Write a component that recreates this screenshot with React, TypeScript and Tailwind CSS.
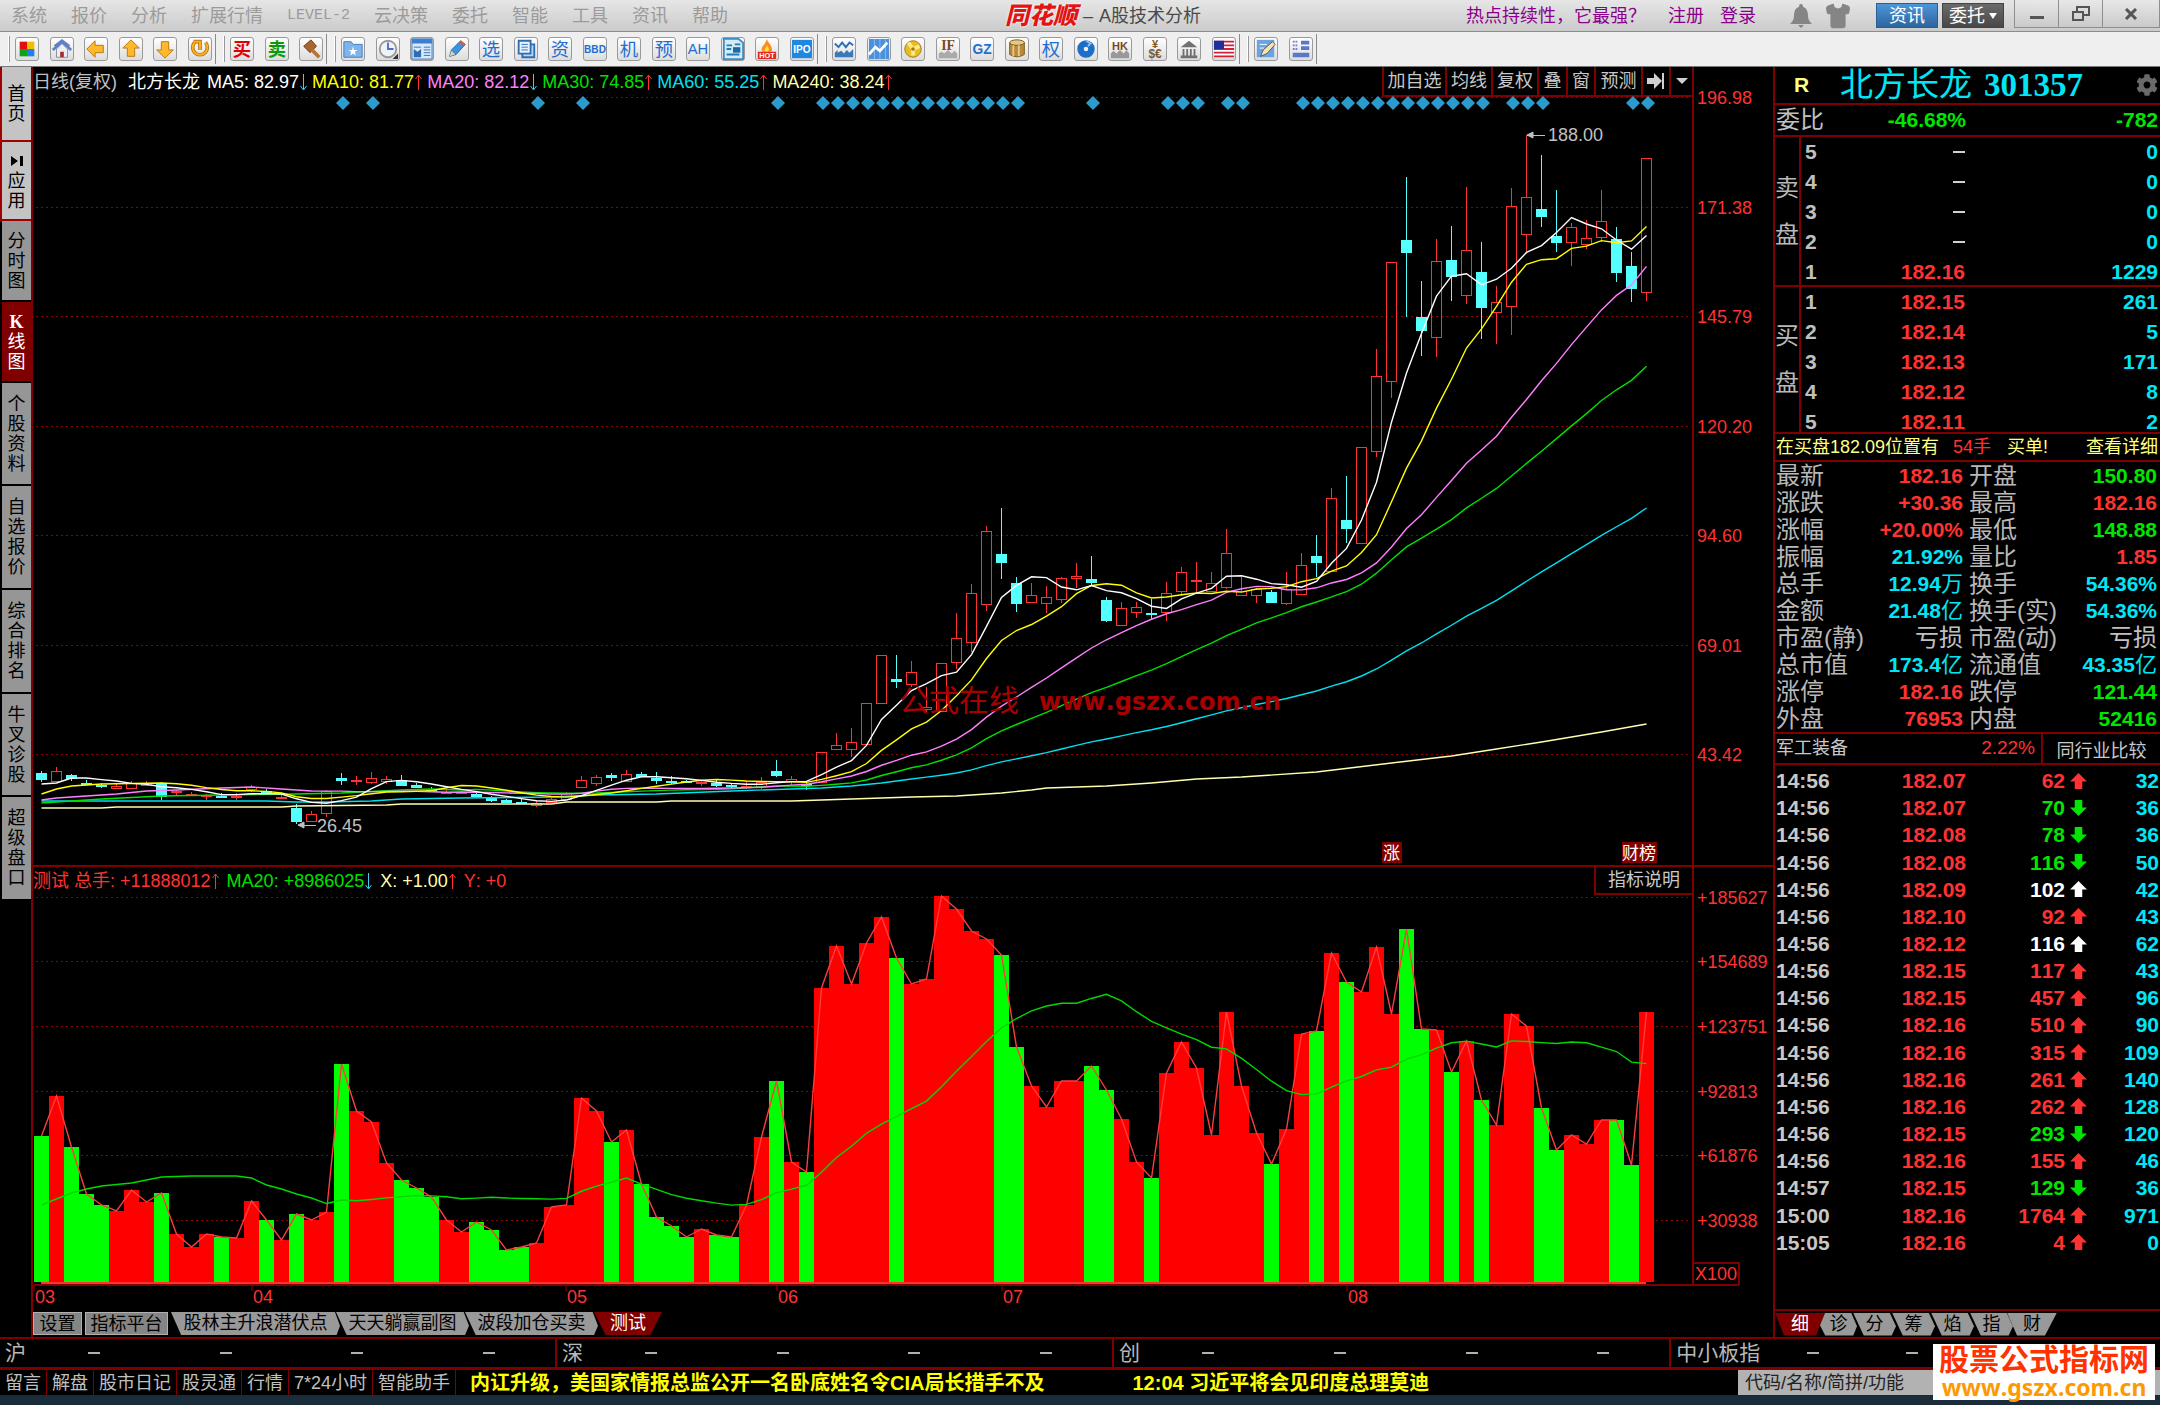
import type { ReactNode } from "react";
import { Shirt } from "lucide-react";
import { FaCog } from "react-icons/fa";

// [open, close, high, low] as chart y positions, one entry per trading day
const candles: [number, number, number, number][] = [
  [773, 779, 771, 782], [781, 771, 767, 782], [775, 778, 774, 781], [783, 784, 780, 784],
  [785, 786, 783, 788], [788, 786, 783, 788], [788, 783, 781, 789], [785, 783, 781, 786],
  [783, 796, 782, 800], [792, 791, 790, 796], [795, 794, 792, 796], [796, 795, 794, 800],
  [796, 797, 793, 798], [797, 796, 793, 800], [789, 787, 785, 792], [791, 793, 789, 795],
  [798, 797, 794, 799], [808, 821, 804, 824], [821, 814, 811, 821], [813, 791, 790, 817],
  [778, 780, 773, 785], [781, 780, 776, 785], [782, 778, 772, 784], [781, 779, 776, 784],
  [780, 785, 775, 786], [785, 787, 783, 787], [789, 791, 787, 792], [793, 792, 790, 794],
  [793, 792, 791, 794], [794, 796, 793, 797], [797, 800, 796, 802], [800, 802, 799, 802],
  [802, 803, 797, 804], [805, 803, 801, 807], [802, 799, 798, 803], [799, 793, 792, 800],
  [787, 780, 776, 788], [783, 777, 775, 786], [775, 777, 773, 781], [781, 774, 770, 781],
  [774, 776, 772, 777], [778, 780, 772, 784], [781, 782, 776, 784], [781, 782, 780, 783],
  [783, 782, 781, 786], [783, 785, 780, 787], [785, 786, 783, 789], [787, 786, 781, 789],
  [786, 782, 777, 789], [771, 775, 760, 777], [781, 779, 776, 785], [784, 785, 781, 790],
  [782, 752, 752, 782], [749, 745, 733, 750], [749, 742, 728, 757], [744, 703, 703, 745],
  [703, 655, 655, 703], [679, 681, 655, 688], [684, 672, 661, 687], [709, 707, 687, 712],
  [711, 663, 663, 711], [662, 638, 613, 669], [642, 593, 584, 652], [604, 531, 526, 611],
  [554, 562, 508, 579], [583, 603, 577, 612], [602, 595, 583, 602], [603, 597, 586, 613],
  [599, 578, 577, 603], [578, 576, 563, 588], [579, 582, 556, 585], [600, 620, 597, 622],
  [625, 608, 602, 625], [612, 607, 602, 618], [613, 614, 599, 619], [612, 593, 582, 621],
  [591, 572, 567, 596], [581, 580, 562, 593], [591, 583, 572, 592], [587, 553, 529, 589],
  [595, 591, 577, 596], [595, 589, 588, 603], [592, 602, 590, 602], [603, 589, 572, 605],
  [594, 565, 553, 595], [556, 562, 535, 577], [571, 498, 488, 572], [520, 528, 476, 543],
  [543, 447, 447, 543], [451, 376, 349, 457], [381, 262, 262, 398], [240, 252, 177, 317],
  [317, 330, 281, 356], [337, 261, 239, 357], [260, 276, 226, 301], [295, 250, 187, 304],
  [272, 307, 242, 339], [312, 302, 286, 344], [306, 206, 188, 335], [234, 197, 135, 252],
  [209, 216, 155, 227], [236, 242, 190, 252], [242, 227, 223, 266], [244, 238, 220, 249],
  [237, 221, 190, 242], [239, 272, 227, 282], [266, 288, 252, 302], [292, 158, 158, 301],
];

const volumes = [
  146, 186, 135, 88, 77, 71, 92, 80, 89, 48, 35, 48, 45, 44, 81, 62, 42, 68, 62, 70, 218, 171,
  160, 119, 102, 94, 85, 62, 50, 60, 52, 32, 35, 39, 75, 77, 184, 171, 140, 152, 98, 65, 56, 45,
  53, 47, 45, 77, 145, 201, 120, 110, 294, 336, 298, 339, 365, 324, 298, 303, 386, 373, 351, 343,
  327, 235, 196, 175, 201, 201, 216, 192, 163, 120, 104, 209, 240, 214, 147, 270, 196, 149, 118,
  153, 248, 251, 329, 300, 290, 335, 268, 353, 253, 252, 210, 241, 182, 157, 268, 256, 174, 132,
  147, 138, 162, 162, 117, 270,
];

const diamonds = [
  20, 22, 33, 36, 49, 52, 53, 54, 55, 56, 57, 58, 59, 60, 61, 62, 63, 64, 65, 70, 75, 76, 77, 79,
  80, 84, 85, 86, 87, 88, 89, 90, 91, 92, 93, 94, 95, 96, 98, 99, 100, 106, 107,
];

type Point = [number, number];

const STEP = 15;
const BASE = 1282;
const xAt = (i: number) => 41.5 + i * STEP;

const toPoints = (points: Point[]) =>
  points.map(([i, y]) => `${xAt(i)},${y}`).join(" ");

// lead holds the days for which the visible data is too short
const average = (values: number[], size: number, lead: Point[]): Point[] => {
  const points = [...lead];
  for (let i = size - 1; i < values.length; i++) {
    const part = values.slice(i - size + 1, i + 1);
    points.push([i, part.reduce((a, b) => a + b, 0) / size]);
  }
  return points;
};

const closes = candles.map((c) => c[1]);

const priceLines = [
  {
    color: "#ffffb0",
    points: [
      [0, 808], [4, 808], [5, 807], [16, 807], [17, 806], [23, 805], [24, 804], [34, 804],
      [35, 802], [41, 802], [42, 801], [50, 801], [52, 800], [56, 798], [58, 797], [61, 796],
      [64, 793], [66, 790], [67, 788], [71, 786], [74, 783], [77, 779], [80, 777], [85, 772],
      [90, 763], [94, 756], [97, 749], [100, 742], [104, 732], [107, 724],
    ] as Point[],
  },
  {
    color: "#00e0f0",
    points: average(closes, 60, [
      [0, 801], [15, 801], [17, 802], [19, 802], [22, 801], [24, 799], [28, 798], [34, 797],
      [37, 795], [41, 794], [46, 791], [50, 789], [52, 788], [54, 786], [56, 783], [58, 779],
    ]),
  },
  {
    color: "#00e000",
    points: average(closes, 30, [
      [0, 803], [2, 801], [4, 799], [8, 796], [12, 795], [17, 794], [20, 793], [24, 790],
      [26, 789], [28, 790],
    ]),
  },
  {
    color: "#ff80ff",
    points: average(closes, 20, [
      [0, 800], [1, 798], [3, 796], [5, 794], [7, 791], [9, 790], [12, 788], [14, 787],
      [16, 789], [17, 790], [18, 791],
    ]),
  },
  {
    color: "#ffff00",
    points: average(closes, 10, [[0, 794], [1, 789], [2, 786], [4, 784], [8, 783]]),
  },
  {
    color: "#ffffff",
    points: average(closes, 5, [[0, 784], [1, 783], [2, 778], [3, 778]]),
  },
];

const volumeAverage = average(volumes, 20, [
  [0, 77], [1, 83], [2, 89], [3, 93], [4, 96], [6, 99], [8, 105], [10, 106], [13, 106],
  [14, 104], [15, 97], [16, 93], [17, 88], [18, 84],
]).map(([i, h]): Point => [i, BASE - h]);

const priceAxis = [
  ["196.98", 97], ["171.38", 207], ["145.79", 316], ["120.20", 426], ["94.60", 535],
  ["69.01", 645], ["43.42", 754],
] as const;

const volumeAxis = [
  ["+185627", 897], ["+154689", 961], ["+123751", 1026], ["+92813", 1091], ["+61876", 1155],
  ["+30938", 1220],
] as const;

const months = [
  ["03", 34], ["04", 252], ["05", 566], ["06", 777], ["07", 1002], ["08", 1347],
] as const;

const menus = ["系统", "报价", "分析", "扩展行情", "LEVEL-2", "云决策", "委托", "智能", "工具", "资讯", "帮助"];

const sideTabs = [
  { label: "首页", look: "h-[75px] bg-[#c4c4c4] text-black border-[#a00000]" },
  { label: "▸应用", look: "h-[79px] bg-[#c4c4c4] text-black border-[#a00000]" },
  { label: "分时图", look: "h-[81px] bg-[#969696] text-black border-black" },
  { label: "K线图", look: "h-[81px] bg-[#800000] text-white border-black" },
  { label: "个股资料", look: "h-[103px] bg-[#969696] text-black border-black" },
  { label: "自选报价", look: "h-[104px] bg-[#969696] text-black border-black" },
  { label: "综合排名", look: "h-[104px] bg-[#969696] text-black border-black" },
  { label: "牛叉诊股", look: "h-[103px] bg-[#969696] text-black border-black" },
  { label: "超级盘口", look: "h-[104px] bg-[#969696] text-black border-black" },
];

const RED = "text-[#ff3232]";
const GREEN = "text-[#00e600]";
const CYAN = "text-[#00e6f6]";
const GREY = "text-[#c0c0c0]";

const sells = [["5", "", "0"], ["4", "", "0"], ["3", "", "0"], ["2", "", "0"], ["1", "182.16", "1229"]];
const buys = [
  ["1", "182.15", "261"], ["2", "182.14", "5"], ["3", "182.13", "171"], ["4", "182.12", "8"],
  ["5", "182.11", "2"],
];

const stats = [
  ["最新", "182.16", RED, "开盘", "150.80", GREEN],
  ["涨跌", "+30.36", RED, "最高", "182.16", RED],
  ["涨幅", "+20.00%", RED, "最低", "148.88", GREEN],
  ["振幅", "21.92%", CYAN, "量比", "1.85", RED],
  ["总手", "12.94万", CYAN, "换手", "54.36%", CYAN],
  ["金额", "21.48亿", CYAN, "换手(实)", "54.36%", CYAN],
  ["市盈(静)", "亏损", GREY, "市盈(动)", "亏损", GREY],
  ["总市值", "173.4亿", CYAN, "流通值", "43.35亿", CYAN],
  ["涨停", "182.16", RED, "跌停", "121.44", GREEN],
  ["外盘", "76953", RED, "内盘", "52416", GREEN],
];

const trades: [string, string, string, "up" | "down" | "flat", string][] = [
  ["14:56", "182.07", "62", "up", "32"],
  ["14:56", "182.07", "70", "down", "36"],
  ["14:56", "182.08", "78", "down", "36"],
  ["14:56", "182.08", "116", "down", "50"],
  ["14:56", "182.09", "102", "flat", "42"],
  ["14:56", "182.10", "92", "up", "43"],
  ["14:56", "182.12", "116", "flat", "62"],
  ["14:56", "182.15", "117", "up", "43"],
  ["14:56", "182.15", "457", "up", "96"],
  ["14:56", "182.16", "510", "up", "90"],
  ["14:56", "182.16", "315", "up", "109"],
  ["14:56", "182.16", "261", "up", "140"],
  ["14:56", "182.16", "262", "up", "128"],
  ["14:56", "182.15", "293", "down", "120"],
  ["14:56", "182.16", "155", "up", "46"],
  ["14:57", "182.15", "129", "down", "36"],
  ["15:00", "182.16", "1764", "up", "971"],
  ["15:05", "182.16", "4", "up", "0"],
];

const tradeColor = { up: RED, down: GREEN, flat: "text-white" };

interface GlyphProps {
  children: string;
  color?: string;
  size?: number;
  weight?: number;
}

const Glyph = ({ children, color = "#1f6fd0", size = 20, weight = 700 }: GlyphProps) => (
  <text
    x="12"
    y="12"
    fill={color}
    fontSize={size}
    fontWeight={weight}
    textAnchor="middle"
    dominantBaseline="central"
  >
    {children}
  </text>
);

const gold = { fill: "#ffb72b", stroke: "#b8740c", strokeWidth: 1 };
const blue = { fill: "none", stroke: "#2e6db4", strokeWidth: 2 };

const toolGroups: { width: string; icons: [string, ReactNode][] }[] = [
  {
    width: "w-[197px]",
    icons: [
      ["面板", <><path d="M4 4h8v8H4z" fill="#e01010" /><path d="M12 4h8v8h-8z" fill="#f0c000" /><path d="M4 12h8v8H4z" fill="#10a020" /><path d="M12 12h8v8h-8z" fill="#2080f0" /></>],
      ["首页", <><path d="M6 12v9h12v-9l-6-6z" fill="#eeeef6" stroke="#889" /><path d="M2 13 12 4l10 9M4 9l8-6 8 6" fill="none" stroke="#5d80c8" strokeWidth="3" /><path d="M10 15h4v6h-4z" fill="#a03030" /></>],
      ["后退", <path d="M2 12l9-9v5h9v8h-9v5z" {...gold} />],
      ["向上", <path d="M12 2l9 9h-5v9H8v-9H3z" {...gold} />],
      ["向下", <path d="M12 22l9-9h-5V4H8v9H3z" {...gold} />],
      ["刷新", <><path d="M6 5a8 8 0 1 0 12 0M12 13V4H5" fill="none" stroke="#b8740c" strokeWidth="4" /><path d="M6 5a8 8 0 1 0 12 0M12 13V4H5" fill="none" stroke="#ffb020" strokeWidth="2" /></>],
    ],
  },
  {
    width: "w-[93px]",
    icons: [
      ["买入", <Glyph color="#e00000">买</Glyph>],
      ["卖出", <Glyph color="#0a9a0a">卖</Glyph>],
      ["交易", <><path d="M4 9l8-7 6 7-7 7z" fill="#a8652c" stroke="#6b3c14" /><path d="M13 13l8 8" stroke="#b5743a" strokeWidth="4" /></>],
    ],
  },
  {
    width: "w-[473px]",
    icons: [
      ["收藏", <><path d="M2 4h8l2 3h10v14H2z" fill="#7db4ea" stroke="#3f7cbf" /><path d="M12 9l1 4h4l-3 2 1 4-3-2-3 2 1-4-3-2h4z" fill="#fff" /></>],
      ["时钟", <><circle cx="12" cy="12" r="9" fill="#eef2fa" stroke="#999" strokeWidth="2" /><path d="M12 5v7h6" fill="none" stroke="#4a6fc0" strokeWidth="2" /><path d="M23 17v6h-6z" fill="#333" /></>],
      ["新闻", <><path d="M1 1h22v22H1z" fill="#d8e9fb" stroke="#2e6db4" /><path d="M1 1h22v5H1z" fill="#3c80cc" /><path d="M3 10h8M14 10h7M14 13h7M14 16h7M14 19h7" stroke="#2e6db4" /><path d="M3 12l4 3 4-3v9H3z" fill="#2e6db4" /></>],
      ["画线", <><path d="M4 20l2-7L16 3l5 4-10 11z" fill="#3f92dd" stroke="#1d5fa8" /><path d="M4 20l2-6 4 4z" fill="#f0d0a0" /><path d="M15 4l5 4" stroke="#d06040" strokeWidth="3" /></>],
      ["选股", <Glyph weight={400}>选</Glyph>],
      ["文档", <><path d="M8 7h13v14H8z" fill="#bcd6f2" stroke="#2e6db4" strokeWidth="2" /><path d="M4 3h13v14H4z" fill="#e6f1fc" stroke="#2e6db4" strokeWidth="2" /><path d="M7 7h7M7 10h7M7 13h7" stroke="#2e6db4" /></>],
      ["资金", <Glyph weight={400}>资</Glyph>],
      ["BBD", <Glyph size={11}>BBD</Glyph>],
      ["机构", <Glyph weight={400}>机</Glyph>],
      ["预测", <Glyph weight={400}>预</Glyph>],
      ["AH", <Glyph size={16} weight={400}>AH</Glyph>],
      ["报表", <><path d="M2 1h16l5 4v18H2z" fill="#d4ebf8" stroke="#3a8fc4" strokeWidth="2" /><path d="M5 8h6M5 12h5M5 18h14M14 7h6" stroke="#237ab8" strokeWidth="2" /><path d="M12 10h8v6h-8z" fill="#1d6ba0" /></>],
      ["热点", <><path d="M12 1c1 5 7 7 5 14H7c-3-5 3-7 5-14z" fill="#ff8a1c" /><path d="M12 8c2 3 3 4 1 7h-3c-2-3 1-4 2-7z" fill="#ffe14a" /><path d="M2 15h20v8H2z" fill="#e02a20" /><text x="12" y="22" fill="#fff" fontSize="8" fontWeight="700" textAnchor="middle">HOT</text></>],
      ["新股", <><path d="M1 2h22v20H1z" fill="#1e88e0" /><Glyph color="#fff" size={11}>IPO</Glyph></>],
    ],
  },
  {
    width: "w-[404px]",
    icons: [
      ["走势", <><path d="M2 6l4 4 4-5 4 5 4-5 4 3" {...blue} /><path d="M2 21v-5l3-3v3l4-2 3 3 3-4 3 3 4-4v9z" fill="#3a78b8" /></>],
      ["图表", <><path d="M1 1h22v22H1z" fill="#4b90dc" /><path d="M7 1v22M13 1v22M19 1v22" stroke="#8fbcf0" /><path d="M1 18l7-8 5 4 8-9" fill="none" stroke="#fff" strokeWidth="3" /></>],
      ["基金", <><circle cx="12" cy="12" r="9" fill="#e8bc22" stroke="#a07a10" /><path d="M12 12L7 5m5 7l7-3m-7 3v7" stroke="#ffe98a" strokeWidth="4" /><circle cx="12" cy="12" r="2" fill="#a07a10" /></>],
      ["股指期货", <><path d="M2 22v-5l3-2 3 2 4-4 4 4 3-3 3 3v5z" fill="#aaa" /><text x="12" y="13" fill="#7a4a20" fontSize="15" fontWeight="700" textAnchor="middle" fontFamily="Liberation Serif">IF</text></>],
      ["国债", <Glyph size={15}>GZ</Glyph>],
      ["期货", <><path d="M4 5h16v13q-8 5-16 0z" fill="#b88a3c" stroke="#7b5718" /><ellipse cx="12" cy="5" rx="8" ry="3" fill="#e6c888" stroke="#7b5718" /><path d="M8 8v12M14 8v12" stroke="#e6c888" strokeWidth="2" /></>],
      ["期权", <Glyph weight={400}>权</Glyph>],
      ["外汇", <><circle cx="12" cy="12" r="6" fill="none" stroke="#1c6fc8" strokeWidth="7" /><path d="M12 3l5 3-3 3" fill="none" stroke="#8fc0f2" strokeWidth="2" /></>],
      ["港股", <><path d="M2 22v-5l3-3 3 3 4-4 4 4 3-4 3 4v5z" fill="#999" /><text x="12" y="13" fill="#7a4a20" fontSize="12" fontWeight="700" textAnchor="middle">HK</text></>],
      ["货币", <><text x="12" y="11" fill="#7a5a30" fontSize="12" fontWeight="700" textAnchor="middle">¥</text><text x="12" y="22" fill="#7a5a30" fontSize="13" fontWeight="700" textAnchor="middle">$€</text></>],
      ["宏观", <path d="M3 10l9-7 9 7zM5 12h2v7H5zM9 12h2v7H9zM13 12h2v7h-2zM17 12h2v7h-2zM3 19h18v3H3z" fill="#707070" />],
      ["美股", <><path d="M1 3h22v18H1z" fill="#fff" /><path d="M1 4h22M1 8h22M1 12h22M1 16h22M1 20h22" stroke="#d0203a" strokeWidth="2" /><path d="M1 3h11v9H1z" fill="#1c2f9c" /></>],
    ],
  },
  {
    width: "w-[59px]",
    icons: [
      ["编辑", <><path d="M2 2h19v19H2z" fill="#6ba3e0" /><path d="M5 7h8M5 11h5" stroke="#fff" /><path d="M6 20l3-7L19 4l3 3-9 10z" fill="#f5e3b0" stroke="#555" /></>],
      ["布局", <><path d="M3 4h6M3 8h6M3 12h6" stroke="#6b7fd0" strokeDasharray="2 1" strokeWidth="2" /><path d="M12 3h9v4h-9zM12 9h9v4h-9zM3 16h18v5H3z" fill="#5a78c8" /></>],
    ],
  },
];

const Trend = ({ up }: { up?: boolean }) => (
  <svg width="8" height="18" viewBox="0 0 8 18" fill="none" stroke={up ? "#ff3232" : "#40d0f0"}>
    {up ? <path d="M4.5 17V2M1.5 6l3-4 3 4" /> : <path d="M4.5 1v15M1.5 13l3 4 3-4" />}
  </svg>
);

const Reading = ({ color, text, up }: { color: string; text: string; up?: boolean }) => (
  <span className={`mr-[5px] flex items-center ${color}`}>
    {text}
    {up !== undefined && <Trend up={up} />}
  </span>
);

const TitleBar = () => (
  <header className="flex h-8 items-center border-b border-[#8c8c8c] bg-linear-to-b from-[#e6e6e6] to-[#cbcbcb] text-[18px] leading-6">
    <nav className="flex gap-6 pl-[11px] text-[#9b9b9b]">
      {menus.map((menu) => (
        <button
          key={menu}
          className={menu === "LEVEL-2" ? "font-['Liberation_Mono',monospace] text-[15px]" : ""}
        >
          {menu}
        </button>
      ))}
    </nav>
    <h1 className="flex flex-1 items-center justify-center gap-[6px] pl-3 text-[#4a4a4a]">
      <span className="text-[24px] font-black text-[#e01515] italic [text-shadow:0_0_2px_#fff,0_0_2px_#fff]">
        同花顺
      </span>
      <span>–</span>
      <span>A股技术分析</span>
    </h1>
    <div className="flex h-full items-center text-[#8b008b]">
      <a href="#hot">热点持续性，它最强？</a>
      <a href="#register" className="ml-[22px]">注册</a>
      <a href="#login" className="ml-4">登录</a>
      <button aria-label="消息" className="ml-[34px]">
        <svg width="22" height="24" viewBox="0 0 22 24" fill="#858585">
          <path d="M11 0c2 0 2 2 2 3 4 1 5 5 5 9 0 4 2 6 4 8H0c2-2 4-4 4-8 0-4 1-8 5-9 0-1 0-3 2-3zM8 21h6l-3 3z" />
        </svg>
      </button>
      <button aria-label="换肤" className="ml-3">
        <Shirt size={28} fill="#858585" color="#858585" strokeWidth={1} />
      </button>
      <button className="ml-6 h-[25px] w-[62px] border border-[#2d5f96] bg-linear-to-b from-[#4d96da] to-[#2d659e] text-white">
        资讯
      </button>
      <button className="ml-1 flex h-[25px] w-[62px] items-center justify-center gap-1 border border-[#444] bg-linear-to-b from-[#6a6a6a] to-[#484848] text-white">
        委托
        <span className="border-x-4 border-t-[6px] border-x-transparent border-t-white" />
      </button>
      <div className="ml-[10px] flex h-7 self-start border border-t-0 border-[#8f8f8f] bg-linear-to-b from-[#e8e8e8] to-[#cacaca]">
        <button aria-label="最小化" className="flex w-11 items-center justify-center border-r border-[#8f8f8f] pt-2">
          <span className="h-[3px] w-[14px] bg-[#555]" />
        </button>
        <button aria-label="还原" className="flex w-11 items-center justify-center border-r border-[#8f8f8f]">
          <svg width="18" height="16" viewBox="0 0 18 16" fill="none" stroke="#555" strokeWidth="2">
            <path d="M5 5V1h12v8h-5M1 6h10v8H1z" />
          </svg>
        </button>
        <button aria-label="关闭" className="flex w-[56px] items-center justify-center">
          <svg width="14" height="12" viewBox="0 0 14 12" stroke="#555" strokeWidth="3">
            <path d="M2 1l10 10M12 1L2 11" />
          </svg>
        </button>
      </div>
    </div>
  </header>
);

const Toolbar = () => (
  <div className="flex h-[35px] items-center gap-[7px] border-b border-[#777] bg-[#efefef] pl-2">
    {toolGroups.map((group) => (
      <div key={group.width} className="flex h-[30px] items-center">
        <span className="mr-[5px] h-[26px] w-[2px] border-r border-[#999] bg-white" />
        <div className={`flex justify-between ${group.width}`}>
          {group.icons.map(([label, icon]) => (
            <button
              key={label}
              aria-label={label}
              className="h-6 w-6 rounded-[3px] border border-[#9a9a9a] bg-linear-to-b from-white to-[#dcdcdc]"
            >
              <svg viewBox="0 0 24 24" className="h-full w-full">
                {icon}
              </svg>
            </button>
          ))}
        </div>
        <span className="ml-[3px] h-[30px] w-px bg-[#8a8a8a]" />
      </div>
    ))}
  </div>
);

const SideTabs = () => (
  <nav className="w-[33px] shrink-0 border-r-2 border-[#800000] bg-black">
    {sideTabs.map(({ label, look }) => (
      <button
        key={label}
        className={`flex w-[31px] flex-col items-center justify-center border-b-2 border-l-2 text-[18px] leading-5 ${look}`}
      >
        {[...label].map((char, i) =>
          char === "▸" ? (
            <svg key={i} width="14" height="20" viewBox="0 0 14 20" fill="currentColor">
              <path d="M1 5l7 5-7 5zM10 5h3v10h-3z" />
            </svg>
          ) : (
            <span
              key={i}
              className={char === "K" ? "font-['Liberation_Serif',serif] font-bold" : ""}
            >
              {char}
            </span>
          ),
        )}
      </button>
    ))}
  </nav>
);

const GridLine = ({ y }: { y: number }) => (
  <line x1="36" x2="1690" y1={y + 0.5} y2={y + 0.5} stroke="#900000" strokeDasharray="2 3" />
);

const AxisLabel = ({ y, children }: { y: number; children: string }) => (
  <text x="1697" y={y} dy="7" fill="#ff3232" fontSize="18">
    {children}
  </text>
);

const PriceChart = () => (
  <svg viewBox="33 97 1740 768" className="block w-full overflow-visible">
    {priceAxis.map(([label, y]) => (
      <g key={label}>
        <GridLine y={y} />
        <AxisLabel y={y}>{label}</AxisLabel>
      </g>
    ))}
    <line x1="1693" x2="1693" y1="97" y2="865" stroke="#800000" strokeWidth="2" />
    {diamonds.map((i) => (
      <path key={i} d={`M${43 + i * STEP} 96l7 7-7 7-7-7z`} fill="#2b9bcb" />
    ))}
    {candles.map(([open, close, high, low], i) => {
      const x = xAt(i);
      if (open < close) {
        return (
          <g key={i} fill="#54ffff" stroke="#54ffff">
            <line x1={x} x2={x} y1={high} y2={low} />
            <rect x={x - 5} y={open + 0.5} width="10" height={close - open} />
          </g>
        );
      }
      return (
        <g key={i} fill="none" stroke="#ff3232">
          <line x1={x} x2={x} y1={high} y2={close} />
          <line x1={x} x2={x} y1={open} y2={low} />
          <rect x={x - 5} y={close + 0.5} width="10" height={open - close} />
        </g>
      );
    })}
    {priceLines.map(({ color, points }) => (
      <polyline
        key={color}
        points={toPoints(points)}
        fill="none"
        stroke={color}
        strokeWidth="1.4"
      />
    ))}
    <g fill="#a80000">
      <text x="899" y="711" fontSize="30">公式在线</text>
      <text x="1039" y="710" fontSize="24" fontWeight="700" fontFamily="DejaVu Sans">
        www.gszx.com.cn
      </text>
    </g>
    <g fill="#c0c0c0" stroke="#c0c0c0">
      <path d="M1527 135l6-3v6zM1527 135.5h18M298 825l6-3v6zM298 825.5h18" />
      <text x="1548" y="141" fontSize="18" stroke="none">188.00</text>
      <text x="317" y="832" fontSize="18" stroke="none">26.45</text>
    </g>
    <g fill="#800000">
      <rect x="1382" y="842" width="20" height="21" />
      <rect x="1622" y="842" width="35" height="21" />
    </g>
    <g fill="#fff" fontSize="17">
      <text x="1383" y="859">涨</text>
      <text x="1622" y="859">财榜</text>
    </g>
  </svg>
);

const VolumeChart = () => (
  <svg viewBox="33 895 1740 415" className="block w-full overflow-visible">
    {volumeAxis.map(([label, y]) => (
      <g key={label}>
        <GridLine y={y} />
        <AxisLabel y={y}>{label}</AxisLabel>
      </g>
    ))}
    {volumes.map((height, i) => (
      <rect
        key={i}
        x={34 + i * STEP}
        y={BASE - height}
        width={STEP}
        height={height}
        fill={candles[i][0] < candles[i][1] ? "#00ff00" : "#ff0000"}
        shapeRendering="crispEdges"
      />
    ))}
    <polyline
      points={toPoints(volumes.map((height, i): Point => [i, BASE - height]))}
      fill="none"
      stroke="#ff3c3c"
      strokeWidth="1.4"
    />
    <polyline points={toPoints(volumeAverage)} fill="none" stroke="#00d800" strokeWidth="1.4" />
    <path d="M41 1283h1605" stroke="#ff3232" strokeWidth="2" />
    <path d="M34 1285h1705M1693 895v390M1694 1263h45v22" fill="none" stroke="#800000" strokeWidth="2" />
    <text x="1695" y="1280" fill="#ff3232" fontSize="18">X100</text>
    {months.map(([label, x]) => (
      <g key={label}>
        <path d={`M${x} 1285v6`} stroke="#a00000" />
        <text x={x + 1} y="1303" fill="#ff3232" fontSize="18">{label}</text>
      </g>
    ))}
  </svg>
);

const chartButton = "h-full border-r-2 border-[#800000]";

const Charts = () => (
  <main className="flex min-w-0 flex-1 flex-col">
    <div className="flex h-[30px] text-[18px] leading-6 text-[#d8d8d8]">
      <div className="flex flex-1 items-center whitespace-nowrap">
        <span className="mr-[11px] text-[#c0c0c0]">日线(复权)</span>
        <span className="mr-[7px] text-white">北方长龙</span>
        <Reading color="text-white" text="MA5: 82.97" up={false} />
        <Reading color="text-[#ffff00]" text="MA10: 81.77" up />
        <Reading color="text-[#ff80ff]" text="MA20: 82.12" up={false} />
        <Reading color="text-[#00e000]" text="MA30: 74.85" up />
        <Reading color="text-[#00e0f0]" text="MA60: 55.25" up />
        <Reading color="text-[#ffffa8]" text="MA240: 38.24" up />
      </div>
      <div className="mr-[79px] flex border-b-2 border-l-2 border-[#800000] text-[#c8c8c8]">
        <button className={`w-[63px] ${chartButton}`}>加自选</button>
        <button className={`w-[46px] ${chartButton}`}>均线</button>
        <button className={`w-[46px] ${chartButton}`}>复权</button>
        <button className={`w-[29px] ${chartButton}`}>叠</button>
        <button className={`w-[28px] ${chartButton}`}>窗</button>
        <button className={`w-[47px] ${chartButton}`}>预测</button>
        <button aria-label="跳至最新" className={`flex w-[28px] items-center justify-center ${chartButton}`}>
          <svg width="18" height="16" viewBox="0 0 18 16" fill="#d0d0d0">
            <path d="M0 5h7V0l8 8-8 8v-5H0zM15 0h2v16h-2z" />
          </svg>
        </button>
        <button aria-label="更多" className={`flex w-[23px] items-center justify-center ${chartButton}`}>
          <span className="border-x-[6px] border-t-[6px] border-x-transparent border-t-[#d0d0d0]" />
        </button>
      </div>
    </div>
    <PriceChart />
    <div className="flex h-[30px] border-t-2 border-[#800000] text-[18px] leading-6">
      <div className="flex flex-1 items-center gap-[3px] whitespace-nowrap">
        <Reading color={RED} text="测试 总手: +11888012" up />
        <Reading color="text-[#00e000]" text="MA20: +8986025" up={false} />
        <Reading color="text-[#ffffa8]" text="X: +1.00" up />
        <Reading color={RED} text="Y: +0" />
      </div>
      <button className="mr-[79px] w-[100px] border-2 border-t-0 border-[#800000] text-[#c8c8c8]">
        指标说明
      </button>
    </div>
    <VolumeChart />
    <div className="flex h-[27px] items-center text-[18px] leading-[23px] text-black">
      <button className="h-[23px] w-[49px] border border-[#b0b0b0] bg-[#858585]">设置</button>
      <button className="ml-[3px] h-[23px] w-[83px] border border-[#b0b0b0] bg-[#858585]">指标平台</button>
      <button className="ml-[3px] h-[23px] w-[169px] bg-[#999] [clip-path:polygon(0_0,97%_0,100%_60%,98%_100%,6%_100%)]">
        股林主升浪潜伏点
      </button>
      <button className="-ml-1 h-[23px] w-[133px] bg-[#999] [clip-path:polygon(0_0,96%_0,100%_60%,97%_100%,8%_100%)]">
        天天躺赢副图
      </button>
      <button className="-ml-1 h-[23px] w-[133px] bg-[#999] [clip-path:polygon(0_0,96%_0,100%_60%,97%_100%,8%_100%)]">
        波段加仓买卖
      </button>
      <button className="-ml-1 h-[23px] w-[68px] bg-[#800000] text-white [clip-path:polygon(0_0,100%_0,83%_100%,17%_100%)]">
        测试
      </button>
    </div>
  </main>
);

const Book = ({ name, rows, height }: { name: string; rows: string[][]; height: string }) => (
  <div className={`flex items-start border-b-2 border-[#800000] ${height}`}>
    <div className="flex h-full w-[26px] flex-col items-center justify-center gap-[11px] border-r-2 border-[#800000] text-[24px] leading-9 text-[#b8b8b8]">
      {[...name].map((char) => (
        <span key={char}>{char}</span>
      ))}
    </div>
    <table className="flex-1 text-[21px] leading-[30px] font-bold">
      <tbody>
        {rows.map(([level, price, amount]) => (
          <tr key={level} className="h-[30px]">
            <th className="w-10 p-0 pl-1 text-left text-[#c0c0c0]">{level}</th>
            <td className={`w-[124px] p-0 text-right ${RED}`}>
              {price || <span className="block h-[2px] w-3 justify-self-end bg-[#d0d0d0]" />}
            </td>
            <td className={`p-0 pr-[2px] text-right ${CYAN}`}>{amount}</td>
          </tr>
        ))}
      </tbody>
    </table>
  </div>
);

const Quote = ({ text, color }: { text: string; color: string }) => {
  const unit = text.match(/[万亿]$/)?.[0] ?? "";
  const number = text.replace(unit, "");
  return (
    <span className={color}>
      <span className={color === GREY ? "text-[24px]" : "font-bold"}>{number}</span>
      {unit && <span className="text-[22px]">{unit}</span>}
    </span>
  );
};

const sideTabShape =
  "-ml-1 h-[23px] w-[43px] bg-[#999] [clip-path:polygon(0_0,85%_0,100%_60%,90%_100%,25%_100%)]";

const QuotePanel = () => (
  <aside className="flex w-[387px] shrink-0 flex-col border-l-2 border-[#800000]">
    <div className="flex h-[38px] items-center border-b-2 border-[#800000] pl-[19px]">
      <span className="w-[46px] text-[21px] font-bold text-[#ffff80]">R</span>
      <h2 className={`flex flex-1 items-center gap-3 font-['Liberation_Serif','Noto_Sans_CJK_SC',serif] text-[33px] leading-8 ${CYAN}`}>
        <span>北方长龙</span>
        <b>301357</b>
      </h2>
      <button aria-label="设置" className="mr-[2px]">
        <FaCog size={22} color="#6a6a6a" />
      </button>
    </div>
    <div className="flex h-8 items-center border-b-2 border-[#800000] pl-[1px] text-[21px] font-bold">
      <span className="w-[60px] text-[24px] font-normal text-[#c0c0c0]">委比</span>
      <span className={`w-[130px] text-right ${GREEN}`}>-46.68%</span>
      <span className={`flex-1 pr-[2px] text-right ${GREEN}`}>-782</span>
    </div>
    <Book name="卖盘" rows={sells} height="h-[150px]" />
    <Book name="买盘" rows={buys} height="h-[147px]" />
    <div className="flex h-[28px] items-center border-b-2 border-[#800000] pr-[2px] pl-[1px] text-[18px] whitespace-nowrap text-[#ffff80]">
      <span>在买盘182.09位置有</span>
      <span className={`ml-[14px] ${RED}`}>54手</span>
      <span className="ml-4">买单!</span>
      <button className="ml-auto">查看详细</button>
    </div>
    <dl className="border-b-2 border-[#800000] pr-[3px] pl-[1px]">
      {stats.map(([label, value, color, label2, value2, color2]) => (
        <div key={label} className="flex h-[27px] items-center text-[21px] leading-[27px]">
          <dt className="text-[24px] text-[#b8b8b8]">{label}</dt>
          <dd className="flex-1 pr-[6px] text-right"><Quote text={value} color={color} /></dd>
          <div className="flex w-[188px] items-center">
            <dt className="text-[24px] text-[#b8b8b8]">{label2}</dt>
            <dd className="flex-1 text-right"><Quote text={value2} color={color2} /></dd>
          </div>
        </div>
      ))}
    </dl>
    <div className="flex h-[31px] items-center border-b-2 border-[#800000] pl-[1px] text-[18px] text-[#c8c8c8]">
      <span className="flex-1">军工装备</span>
      <span className={`mr-[6px] text-[19px] ${RED}`}>2.22%</span>
      <button className="h-full w-[119px] border-l-2 border-[#800000] pt-1">同行业比较</button>
    </div>
    <div className="flex-1 border-b-2 border-[#800000] pt-[2px]">
      <table className="h-[489px] w-full text-[21px] leading-[27px] font-bold">
        <tbody>
          {trades.map(([time, price, amount, side, count], i) => (
            <tr key={i}>
              <td className="w-[70px] p-0 pl-[1px] text-[#c8c8c8]">{time}</td>
              <td className={`w-[121px] p-0 text-right ${RED}`}>{price}</td>
              <td className={`w-[99px] p-0 text-right ${tradeColor[side]}`}>{amount}</td>
              <td className={`w-[23px] p-0 pl-[5px] ${tradeColor[side]}`}>
                <svg width="17" height="16" viewBox="0 0 18 17" fill="currentColor">
                  <path d={side === "down" ? "M5 0h8v8h5l-9 9-9-9h5z" : "M5 17h8V9h5L9 0 0 9h5z"} />
                </svg>
              </td>
              <td className={`p-0 pr-[1px] text-right ${CYAN}`}>{count}</td>
            </tr>
          ))}
        </tbody>
      </table>
    </div>
    <div className="flex h-[26px] items-center text-[18px] leading-[23px] text-black">
      <button className="h-[23px] w-[50px] bg-[#800000] text-white [clip-path:polygon(0_0,100%_0,82%_100%,18%_100%)]">
        细
      </button>
      <button className="-ml-[5px] h-[23px] w-[37px] bg-[#999] [clip-path:polygon(14%_0,84%_0,100%_60%,90%_100%,14%_100%,0_55%)]">
        诊
      </button>
      {["分", "筹", "焰", "指"].map((tab) => (
        <button key={tab} className={sideTabShape}>{tab}</button>
      ))}
      <button className="-ml-[6px] h-[23px] w-[50px] bg-[#999] [clip-path:polygon(0_0,100%_0,76%_100%,20%_100%)]">
        财
      </button>
    </div>
  </aside>
);

const Dashes = () => (
  <>
    {[0, 1, 2, 3].map((i) => (
      <span key={i} className="flex flex-1 justify-center">
        <span className="h-[2px] w-3 bg-[#b0b0b0]" />
      </span>
    ))}
  </>
);

const IndexBar = () => (
  <div className="flex h-[30px] items-stretch border-t-2 border-[#800000] text-[21px] leading-6 text-[#b8b8b8]">
    {["沪", "深", "创"].map((name) => (
      <div key={name} className="flex flex-[557] items-center border-r-2 border-[#800000] pl-[5px]">
        <span className="w-[23px]">{name}</span>
        <Dashes />
      </div>
    ))}
    <div className="flex flex-[490] items-center pl-[5px]">
      <span className="w-[87px]">中小板指</span>
      <Dashes />
    </div>
  </div>
);

const NewsBar = () => (
  <div className="flex h-[29px] items-stretch border-t-[3px] border-b border-[#800000] text-[18px] leading-6">
    {["留言", "解盘", "股市日记", "股灵通", "行情", "7*24小时", "智能助手"].map((label) => (
      <button key={label} className="border-r border-[#800000] px-[5px] whitespace-nowrap text-[#c0c0c0]">
        {label}
      </button>
    ))}
    <div className="flex flex-1 items-center gap-[88px] overflow-hidden pl-[14px] text-[20px] font-bold whitespace-nowrap text-[#ffff00]">
      <a href="#news-1">内讧升级，美国家情报总监公开一名卧底姓名令CIA局长措手不及</a>
      <a href="#news-2">12:04 习近平将会见印度总理莫迪</a>
    </div>
    <input
      aria-label="代码/名称/简拼/功能"
      placeholder="代码/名称/简拼/功能"
      className="w-[422px] bg-[#b2b2b2] px-[7px] placeholder:text-[#222]"
    />
  </div>
);

export default function App() {
  return (
    <div className="relative flex min-h-screen flex-col bg-[#1b2c3a] font-['Liberation_Sans','Noto_Sans_CJK_SC',sans-serif] [font-kerning:none]">
      <TitleBar />
      <Toolbar />
      <div className="flex bg-black">
        <SideTabs />
        <Charts />
        <QuotePanel />
      </div>
      <div className="bg-black">
        <IndexBar />
        <NewsBar />
      </div>
      <a
        href="#site"
        className="absolute right-[5px] bottom-[5px] flex h-14 w-[222px] flex-col items-center justify-center bg-white font-bold whitespace-nowrap"
      >
        <span className="text-[30px] leading-[30px] text-[#ff3300]">股票公式指标网</span>
        <span className="font-['Noto_Sans',sans-serif] text-[23px] leading-6 text-[#ff9900]">
          www.gszx.com.cn
        </span>
      </a>
    </div>
  );
}
